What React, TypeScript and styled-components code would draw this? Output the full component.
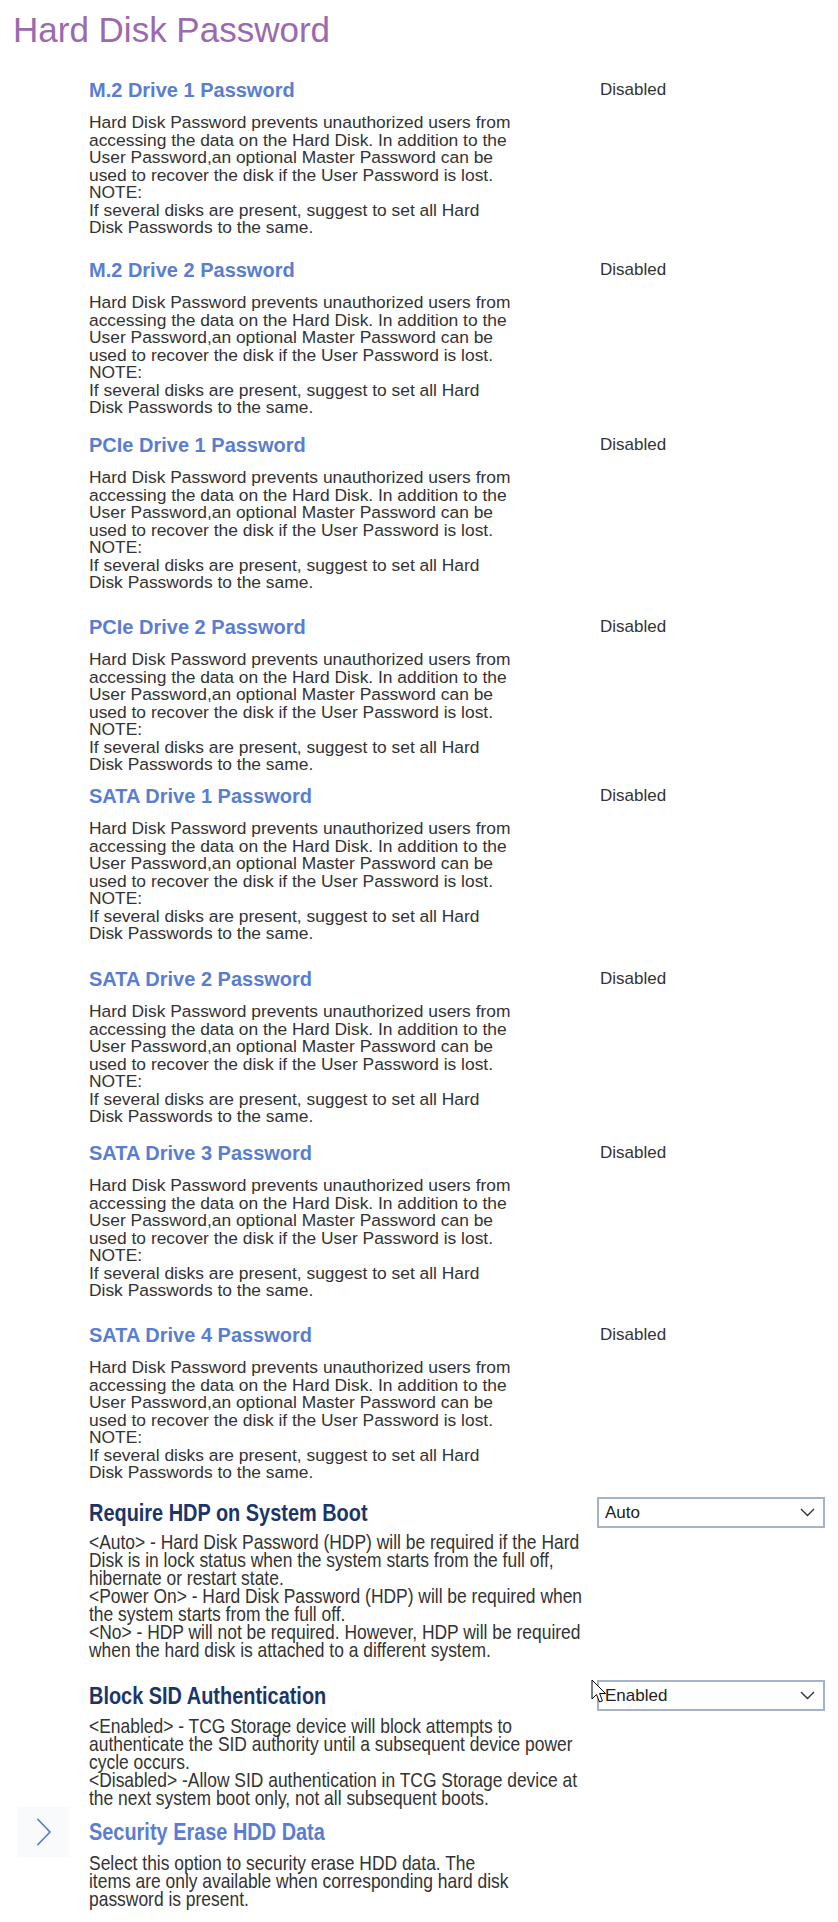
import React from "react";
import styled, { createGlobalStyle, css } from "styled-components";

const GlobalStyle = createGlobalStyle`
  html, body { margin: 0; padding: 0; background: #ffffff; }
  body { font-family: "Liberation Sans", Arial, sans-serif; color: #333333; }
`;

const narrowFace = css`
  font-family: "Liberation Sans", Arial, sans-serif;
  transform: scaleX(0.83);
  transform-origin: left center;
`;

const Page = styled.div`
  width: 838px;
  padding: 10px 0 16px 0;
  position: relative;
`;

const Title = styled.h1`
  margin: 0;
  padding-left: 13px;
  font-family: "Liberation Sans", Arial, sans-serif;
  font-weight: 400;
  font-size: 35px;
  line-height: 40px;
  color: #9b69ad;
`;

const Section = styled.section<{ $top: number; $gap: number }>`
  display: grid;
  grid-template-columns: 71px 508px 228px;
  padding-left: 18px;
  margin-top: ${(p) => p.$top}px;
  row-gap: ${(p) => p.$gap}px;
`;

const Gutter = styled.div`
  grid-column: 1;
  grid-row: 1;
  align-self: center;
  display: flex;
  align-items: center;
  justify-content: center;
  width: 51px;
  height: 50px;
  margin: -13px 0;
  background: #f9fafc;
`;

const Heading = styled.h2<{ $narrow?: boolean; $tone: "link" | "label" }>`
  grid-column: 2;
  grid-row: 1;
  margin: 0;
  font-weight: 700;
  white-space: nowrap;
  color: ${(p) => (p.$tone === "link" ? "#5a7ecf" : "#1b356b")};
  ${(p) =>
    p.$narrow
      ? css`
          ${narrowFace};
          font-size: 24px;
          line-height: 31px;
        `
      : css`
          font-family: "Liberation Sans", Arial, sans-serif;
          font-size: 20px;
          line-height: 24px;
        `}
`;

const Value = styled.div`
  grid-column: 3;
  grid-row: 1;
  align-self: center;
  padding-left: 3px;
  font-size: 17px;
  line-height: 20px;
  color: #333333;
`;

const SelectBox = styled.div`
  grid-column: 3;
  grid-row: 1;
  align-self: center;
  box-sizing: border-box;
  width: 228px;
  height: 31px;
  border: 2px solid #a4b2cc;
  display: flex;
  align-items: center;
  justify-content: space-between;
  padding: 0 8px 0 6px;
  font-size: 17px;
  color: #222222;
  background: #ffffff;
`;

const Description = styled.p<{ $narrow?: boolean }>`
  grid-column: 2;
  grid-row: 2;
  margin: 0;
  color: #333333;
  white-space: nowrap;
  ${(p) =>
    p.$narrow
      ? css`
          ${narrowFace};
          transform-origin: left top;
          font-size: 21px;
          line-height: 18px;
        `
      : css`
          font-family: "Liberation Sans", Arial, sans-serif;
          font-size: 17.4px;
          line-height: 17.5px;
        `}
`;

const Line = styled.span`
  display: block;
`;

const Cursor = styled.svg`
  position: absolute;
  left: 591px;
  top: 1679px;
  pointer-events: none;
`;

const DRIVE_TEXT = [
  "Hard Disk Password prevents unauthorized users from",
  "accessing the data on the Hard Disk. In addition to the",
  "User Password,an optional Master Password can be",
  "used to recover the disk if the User Password is lost.",
  "NOTE:",
  "If several disks are present, suggest to set all Hard",
  "Disk Passwords to the same.",
];

const drives = [
  { name: "M.2 Drive 1 Password", top: 28 },
  { name: "M.2 Drive 2 Password", top: 21.5 },
  { name: "PCIe Drive 1 Password", top: 16.5 },
  { name: "PCIe Drive 2 Password", top: 23.5 },
  { name: "SATA Drive 1 Password", top: 10.5 },
  { name: "SATA Drive 2 Password", top: 24.5 },
  { name: "SATA Drive 3 Password", top: 15.5 },
  { name: "SATA Drive 4 Password", top: 23.5 },
];

const Chevron = () => (
  <svg width="16" height="28" viewBox="0 0 16 28" fill="none">
    <path d="M2 1.5 L14 14 L2 26.5" stroke="#5a7ecf" strokeWidth="1.8" strokeLinecap="round" strokeLinejoin="round" />
  </svg>
);

const Caret = () => (
  <svg width="15" height="9" viewBox="0 0 15 9" fill="none">
    <path d="M1 1 L7.5 7.5 L14 1" stroke="#333333" strokeWidth="1.4" />
  </svg>
);

const Select = ({ value }: { value: string }) => (
  <SelectBox role="combobox">
    <span>{value}</span>
    <Caret />
  </SelectBox>
);

const Lines = ({ lines }: { lines: string[] }) => (
  <>
    {lines.map((l, i) => (
      <Line key={i}>{l}</Line>
    ))}
  </>
);

export default function App() {
  return (
    <Page>
      <GlobalStyle />
      <Title>Hard Disk Password</Title>

      {drives.map((d) => (
        <Section key={d.name} $top={d.top} $gap={12}>
          <Heading $tone="link">{d.name}</Heading>
          <Value>Disabled</Value>
          <Description>
            <Lines lines={DRIVE_TEXT} />
          </Description>
        </Section>
      ))}

      <Section $top={15.5} $gap={5}>
        <Heading $narrow $tone="label">Require HDP on System Boot</Heading>
        <Select value="Auto" />
        <Description $narrow>
          <Lines
            lines={[
              "<Auto> - Hard Disk Password (HDP) will be required if the Hard",
              "Disk is in lock status when the system starts from the full off,",
              "hibernate or restart state.",
              "<Power On> - Hard Disk Password (HDP) will be required when",
              "the system starts from the full off.",
              "<No> - HDP will not be required. However, HDP will be required",
              "when the hard disk is attached to a different system.",
            ]}
          />
        </Description>
      </Section>

      <Section $top={21} $gap={6}>
        <Heading $narrow $tone="label">Block SID Authentication</Heading>
        <Select value="Enabled" />
        <Description $narrow>
          <Lines
            lines={[
              "<Enabled> - TCG Storage device will block attempts to",
              "authenticate the SID authority until a subsequent device power",
              "cycle occurs.",
              "<Disabled> -Allow SID authentication in TCG Storage device at",
              "the next system boot only, not all subsequent boots.",
            ]}
          />
        </Description>
      </Section>

      <Section $top={9} $gap={7}>
        <Gutter>
          <Chevron />
        </Gutter>
        <Heading $narrow $tone="link">Security Erase HDD Data</Heading>
        <Description $narrow>
          <Lines
            lines={[
              "Select this option to security erase HDD data. The",
              "items are only available when corresponding hard disk",
              "password is present.",
            ]}
          />
        </Description>
      </Section>

      <Cursor width="16" height="26" viewBox="0 0 16 26">
        <path
          d="M1 1 L1 20 L5.5 15.5 L8.5 23 L11.5 21.8 L8.6 14.5 L14.5 14.5 Z"
          fill="#ffffff"
          stroke="#000000"
          strokeWidth="1"
          strokeLinejoin="round"
        />
      </Cursor>
    </Page>
  );
}
